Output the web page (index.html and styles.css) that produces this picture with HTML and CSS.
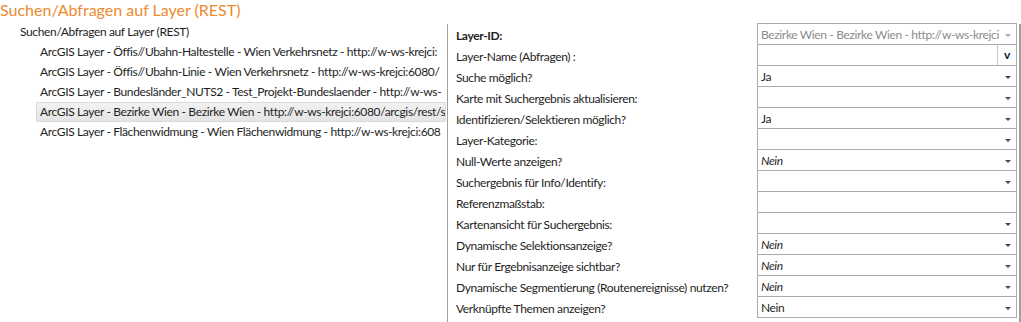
FILE: index.html
```html
<!DOCTYPE html>
<html lang="de">
<head>
<meta charset="UTF-8">
<meta name="viewport" content="width=device-width, initial-scale=1.0">
<title>Suchen/Abfragen auf Layer (REST)</title>
<link rel="stylesheet" href="styles.css">
</head>
<body>
    <!-- Titel -->
    <div class="title">Suchen/Abfragen auf Layer (REST)</div>

    <div class="main">
        <!-- Baum links -->
        <div class="tree">
            <div class="node root">Suchen/Abfragen auf Layer (REST)</div>
            <div class="node item">ArcGIS Layer - Öffis//Ubahn-Haltestelle - Wien Verkehrsnetz - http://w-ws-krejci:</div>
            <div class="node item">ArcGIS Layer - Öffis//Ubahn-Linie - Wien Verkehrsnetz - http://w-ws-krejci:6080/</div>
            <div class="node item">ArcGIS Layer - Bundesländer_NUTS2 - Test_Projekt-Bundeslaender - http://w-ws-</div>
            <div class="node item selected">ArcGIS Layer - Bezirke Wien - Bezirke Wien - http://w-ws-krejci:6080/arcgis/rest/s</div>
            <div class="node item">ArcGIS Layer - Flächenwidmung - Wien Flächenwidmung - http://w-ws-krejci:608</div>
        </div>

        <!-- Eigenschaften rechts -->
        <div class="props">
            <div class="label bold">Layer-ID:</div>
            <div class="field first disabled"><span class="value">Bezirke Wien - Bezirke Wien - http://w-ws-krejci</span><span class="arrow"></span></div>

            <div class="label">Layer-Name (Abfragen) :</div>
            <div class="field"><span class="value"></span><span class="vbtn">v</span></div>

            <div class="label">Suche möglich?</div>
            <div class="field"><span class="value">Ja</span><span class="arrow"></span></div>

            <div class="label">Karte mit Suchergebnis aktualisieren:</div>
            <div class="field"><span class="value"></span><span class="arrow"></span></div>

            <div class="label">Identifizieren/Selektieren möglich?</div>
            <div class="field"><span class="value">Ja</span><span class="arrow"></span></div>

            <div class="label">Layer-Kategorie:</div>
            <div class="field"><span class="value"></span><span class="arrow"></span></div>

            <div class="label">Null-Werte anzeigen?</div>
            <div class="field"><span class="value italic">Nein</span><span class="arrow"></span></div>

            <div class="label">Suchergebnis für Info/Identify:</div>
            <div class="field"><span class="value"></span><span class="arrow"></span></div>

            <div class="label">Referenzmaßstab:</div>
            <div class="field"><span class="value"></span></div>

            <div class="label">Kartenansicht für Suchergebnis:</div>
            <div class="field"><span class="value"></span><span class="arrow"></span></div>

            <div class="label">Dynamische Selektionsanzeige?</div>
            <div class="field"><span class="value italic">Nein</span><span class="arrow"></span></div>

            <div class="label">Nur für Ergebnisanzeige sichtbar?</div>
            <div class="field"><span class="value italic">Nein</span><span class="arrow"></span></div>

            <div class="label">Dynamische Segmentierung (Routenereignisse) nutzen?</div>
            <div class="field"><span class="value italic">Nein</span><span class="arrow"></span></div>

            <div class="label">Verknüpfte Themen anzeigen?</div>
            <div class="field"><span class="value">Nein</span><span class="arrow"></span></div>
        </div>
    </div>
</body>
</html>
```

FILE: styles.css
```css
/* Allgemein */
body {
    margin: 0;
    padding: 0;
    width: 1021px;
    height: 322px;
    overflow: hidden;
    background: #fff;
    font-family: Lato, "Open Sans", sans-serif;
    font-size: 12px;
    letter-spacing: -0.36px;
    color: #1e1e1e;
}

.title {
    height: 22px;
    line-height: 20px;
    font-size: 16px;
    letter-spacing: 0;
    color: #ec8a2f;
    white-space: nowrap;
}

.main {
    display: flex;
    height: 300px;
}

/* Baum */
.tree {
    width: 447px;
    flex: none;
}
.node {
    height: 20px;
    line-height: 20px;
    white-space: nowrap;
    overflow: hidden;
}
.node.root {
    padding-left: 20px;
}
.node.item {
    margin-left: 36px;
    margin-right: 1px;
    padding-left: 4px;
    box-sizing: border-box;
    height: 20px;
}
.node.selected {
    background: linear-gradient(#f2f2f2, #e4e4e4);
    border: 1px solid #d9d9d9;
    border-radius: 1px;
    line-height: 18px;
    padding-left: 3px;
}

/* Formular */
.props {
    flex: 1;
    border-left: 1px solid #a0a0a0;
    border-right: 2px solid #a0a0a0;
    margin-top: 2px;
    padding-left: 8px;
    display: grid;
    grid-template-columns: 301px 260px;
    grid-auto-rows: 21px;
    align-content: start;
}
.label {
    line-height: 23px;
    white-space: nowrap;
    overflow: hidden;
}
.label.bold {
    font-weight: bold;
}
.field {
    display: flex;
    align-items: center;
    border: 1px solid #acacac;
    border-top: none;
    box-sizing: border-box;
    height: 21px;
    padding-left: 3px;
}
.field.first {
    border-top: 1px solid #acacac;
    margin-top: -1px;
    height: 22px;
}
.field .value {
    flex: 1;
    white-space: nowrap;
    overflow: hidden;
}
.field .italic {
    font-style: italic;
}
.field.disabled .value {
    color: #8c8c8c;
}
.arrow {
    width: 0;
    height: 0;
    margin: 2px 5px 0 4px;
    border-left: 3px solid transparent;
    border-right: 3px solid transparent;
    border-top: 3px solid #4a4a4a;
}
.field.disabled .arrow {
    border-top-color: #a8a8a8;
}
.vbtn {
    align-self: stretch;
    width: 18px;
    border-left: 1px solid #c8c8c8;
    text-align: center;
    font-weight: bold;
    font-size: 12px;
    line-height: 19px;
    color: #0b1a3c;
}
```
